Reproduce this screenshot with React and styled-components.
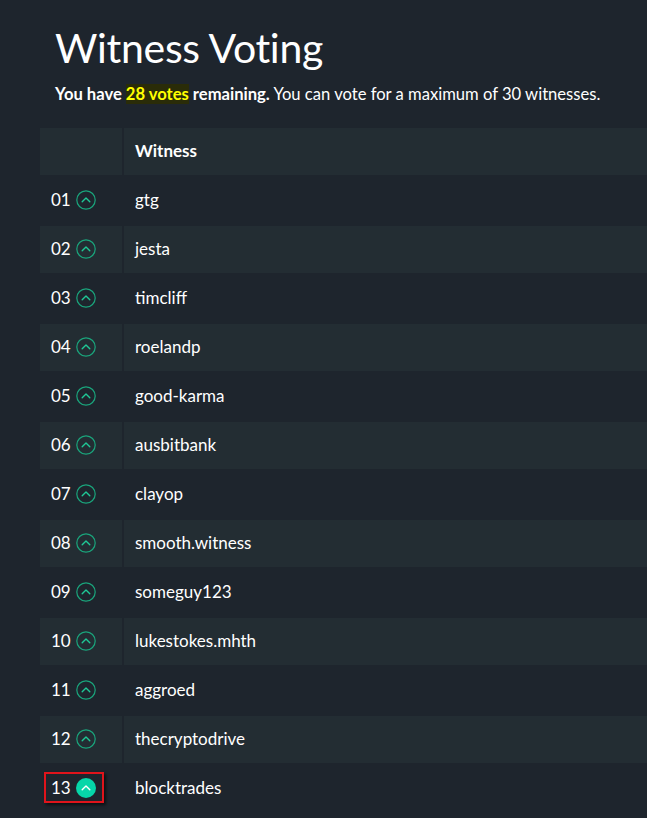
import React from "react";
import styled, { createGlobalStyle } from "styled-components";

const Global = createGlobalStyle`
  html, body { margin: 0; padding: 0; background: #1e252d; overflow: hidden; }
  body { font-family: Lato, "Noto Sans", sans-serif; color: #ffffff; }
`;

const Page = styled.div`
  padding: 23px 0 0 40px;
  width: 900px;
`;

const Title = styled.h1`
  margin: 0 0 0 15px;
  font-weight: 400;
  font-size: 41px;
  line-height: 50px;
  letter-spacing: -0.3px;
`;

const Lead = styled.p`
  margin: 9px 0 22px 15px;
  font-size: 16.6px;
  line-height: 24px;
`;

const Strong = styled.strong`
  font-weight: 700;
`;

const Hi = styled.span`
  color: #ffff00;
  background: #2a2c08;
  font-weight: 700;
`;

const Table = styled.table`
  border-collapse: separate;
  border-spacing: 2px;
  margin-left: -2px;
  margin-top: -2px;
  width: 800px;
`;

const Th = styled.th`
  background: #232d33;
  height: 45px;
  padding: 0 11px 2px;
  text-align: left;
  font-size: 17px;
  font-weight: 700;
  width: ${(p) => (p.$narrow ? "60px" : "auto")};
`;

const Tr = styled.tr`
  background: ${(p) => (p.$odd ? "transparent" : "#232d33")};
`;

const Td = styled.td`
  height: 45px;
  padding: 0 11px 2px;
  font-size: 17px;
  vertical-align: middle;
`;

const Rank = styled.span`
  display: inline-flex;
  align-items: center;
  gap: 5px;
  font-size: 17px;
  padding: 3px 6px 3px 5px;
  margin-left: -7px;
  border: 2px solid ${(p) => (p.$active ? "#e0141b" : "transparent")};
  box-shadow: ${(p) => (p.$active ? "2px 2px 3px rgba(0,0,0,0.6)" : "none")};
`;

const Vote = ({ active }) => (
  <svg width="20" height="20" viewBox="0 0 20 20">
    <circle
      cx="10"
      cy="10"
      r={active ? 10 : 9.2}
      fill={active ? "#06d6a9" : "none"}
      stroke={active ? "none" : "#1aa57c"}
      strokeWidth="1.2"
    />
    <path
      d="M6.2 11.8 L10 8 L13.8 11.8"
      fill="none"
      stroke={active ? "#ffffff" : "#1fc896"}
      strokeWidth="1.4"
      strokeLinecap="round"
      strokeLinejoin="round"
    />
  </svg>
);

const witnesses = [
  "gtg",
  "jesta",
  "timcliff",
  "roelandp",
  "good-karma",
  "ausbitbank",
  "clayop",
  "smooth.witness",
  "someguy123",
  "lukestokes.mhth",
  "aggroed",
  "thecryptodrive",
  "blocktrades",
];

export default function App() {
  return (
    <Page>
      <Global />
      <Title>Witness Voting</Title>
      <Lead>
        <Strong>
          You have <Hi>28 votes</Hi> remaining.
        </Strong>{" "}
        You can vote for a maximum of 30 witnesses.
      </Lead>
      <Table>
        <thead>
          <tr>
            <Th $narrow />
            <Th>Witness</Th>
          </tr>
        </thead>
        <tbody>
          {witnesses.map((w, i) => {
            const active = w === "blocktrades";
            return (
              <Tr key={w} $odd={i % 2 === 0}>
                <Td>
                  <Rank $active={active}>
                    {String(i + 1).padStart(2, "0")}
                    <Vote active={active} />
                  </Rank>
                </Td>
                <Td>{w}</Td>
              </Tr>
            );
          })}
        </tbody>
      </Table>
    </Page>
  );
}
